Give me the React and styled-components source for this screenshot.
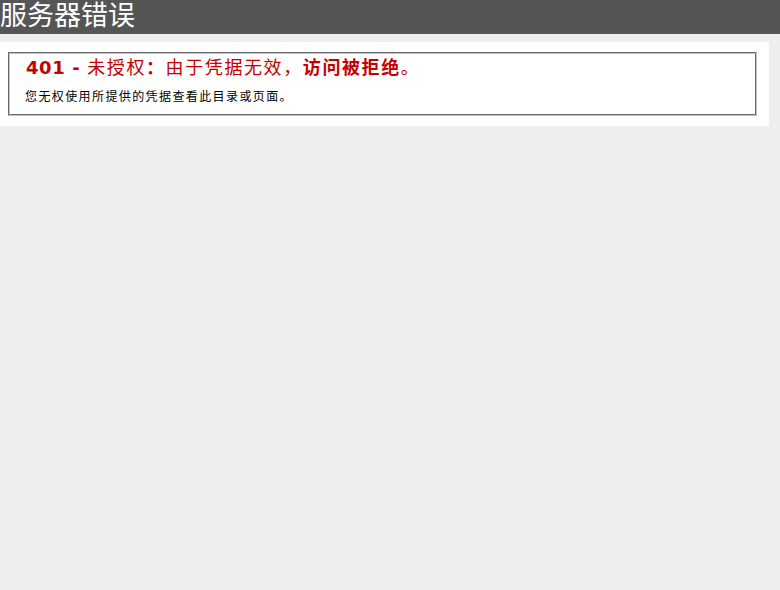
import React from 'react';
import styled, { createGlobalStyle } from 'styled-components';

const GlobalStyle = createGlobalStyle`
  body {
    margin: 0;
    background: #eeeeee;
    font-family: "DejaVu Sans", Verdana, "Noto Sans CJK SC", sans-serif;
  }
`;

const Header = styled.div`
  height: 34px;
  background-color: #555555;
  color: #fff;
`;

const Title = styled.h1`
  margin: 0;
  font-family: "Noto Sans CJK SC", sans-serif;
  font-size: 27px;
  font-weight: 400;
  line-height: 28px;
`;

const ContentContainer = styled.div`
  width: 749px;
  margin-top: 8px;
  padding: 10px 12px 10px 8px;
  background: #fff;
`;

const Fieldset = styled.fieldset`
  margin: 0;
  min-width: 0;
  height: 64px;
  box-sizing: border-box;
  padding: 0 15px 10px 16px;
  border: 2px groove #c0c0c0;
`;

const Heading = styled.h2`
  margin: 0;
  padding-top: 2px;
  font-size: 18px;
  font-weight: 400;
  line-height: 24px;
  color: #c40000;
  white-space: nowrap;
  letter-spacing: 1.6px;
  font-family: "DejaVu Sans", "Noto Sans CJK SC", sans-serif;
`;

const Code = styled.b`
  font-weight: 700;
  letter-spacing: 0.6px;
`;

const Strong = styled.b`
  font-weight: 700;
`;

const Message = styled.h3`
  margin: 7px 0 0 -1px;
  font-size: 12px;
  font-weight: 400;
  line-height: 18px;
  letter-spacing: 1.4px;
  color: #000;
  font-family: "Noto Sans CJK SC", sans-serif;
`;

export default function App() {
  return (
    <>
      <GlobalStyle />
      <Header>
        <Title>服务器错误</Title>
      </Header>
      <ContentContainer>
        <Fieldset>
          <Heading>
            <Code>401 - </Code>未授权<Strong>：</Strong>由于凭据无效，
            <Strong>访问被拒绝</Strong>。
          </Heading>
          <Message>您无权使用所提供的凭据查看此目录或页面。</Message>
        </Fieldset>
      </ContentContainer>
    </>
  );
}
